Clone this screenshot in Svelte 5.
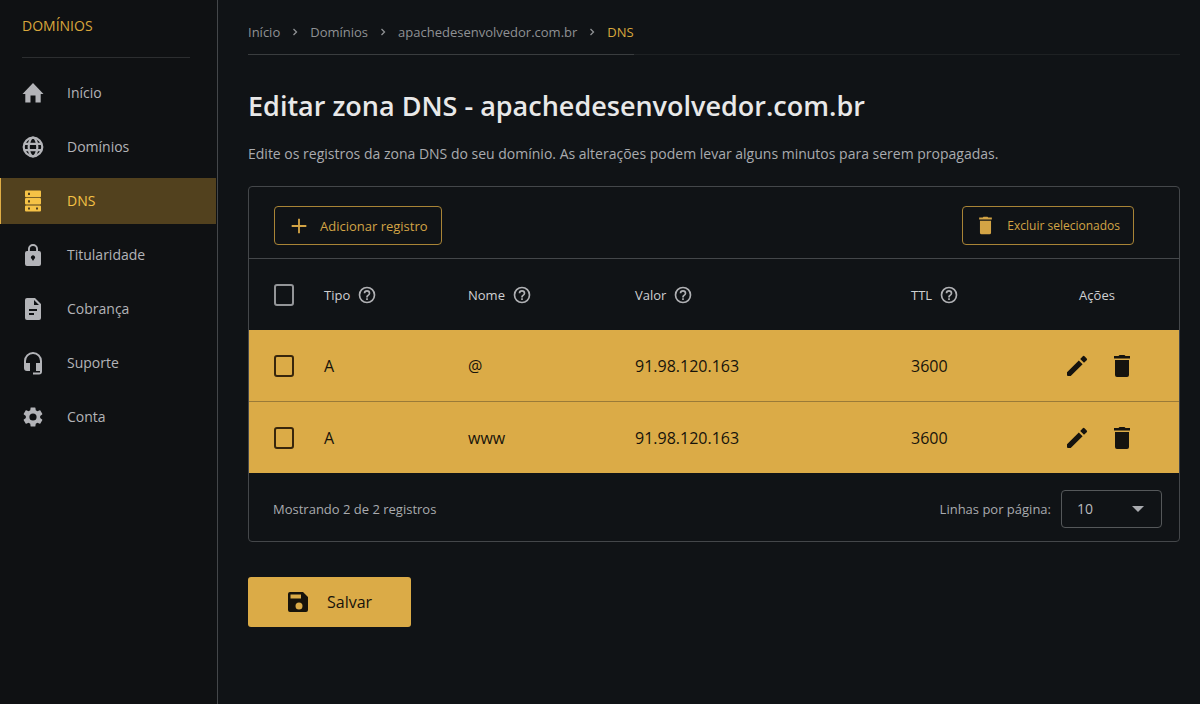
<script lang="ts">
  type IconName = keyof typeof icons;

  const icons = {
    home: 'M9.500 21.500v-7h5v7h5.200v-8.500h2.800L12 2 1.500 13h2.800v8.500z',
    dns: 'M5 1.500h14a1 1 0 0 1 1 1v4.700a1 1 0 0 1-1 1H5a1 1 0 0 1-1-1V2.500a1 1 0 0 1 1-1zm2 2.200v2.200h2V3.700zM5 9h14a1 1 0 0 1 1 1v4.500a1 1 0 0 1-1 1H5a1 1 0 0 1-1-1V10a1 1 0 0 1 1-1zm2 2.200v2.200h2v-2.200zM5 16.500h14a1 1 0 0 1 1 1v4a1 1 0 0 1-1 1H5a1 1 0 0 1-1-1v-4a1 1 0 0 1 1-1zm2 2v2h2v-2zm8 0v2h2v-2z',
    lock: 'M18 8h-1V6A5 5 0 0 0 7 6v2H6a2 2 0 0 0-2 2v11a2 2 0 0 0 2 2h12a2 2 0 0 0 2-2V10a2 2 0 0 0-2-2zM8.900 6a3.100 3.100 0 0 1 6.200 0v2H8.900zM12 18l-1.200-2a2 2 0 1 1 2.400 0z',
    file: 'M14 1H6a2 2 0 0 0-2 2v18a2 2 0 0 0 2 2h12a2 2 0 0 0 2-2V7zm-1 17H8v-2h5zm3-4H8v-2h8zm-3-6V3l5 5z',
    headset:
      'M12 1a9 9 0 0 0-9 9v7a3 3 0 0 0 3 3h3v-8H5v-2a7 7 0 0 1 14 0v2h-4v8h4v1.500h-7v2h6a3 3 0 0 0 3-3V10a9 9 0 0 0-9-9z',
    gear: 'M19.140 12.940c.040-.300.060-.610.060-.940 0-.320-.020-.640-.070-.940l2.030-1.580a.490.490 0 0 0 .120-.610l-1.920-3.320a.488.488 0 0 0-.590-.220l-2.390.960c-.500-.380-1.030-.700-1.620-.940l-.360-2.540a.484.484 0 0 0-.480-.410h-3.840c-.240 0-.430.170-.470.410l-.360 2.540c-.590.240-1.130.570-1.620.940l-2.390-.960c-.220-.080-.470 0-.590.220L2.740 8.870c-.120.210-.080.470.120.610l2.030 1.580c-.050.300-.090.630-.090.940s.020.640.070.940l-2.030 1.580a.490.490 0 0 0-.120.610l1.920 3.320c.120.220.370.290.590.220l2.390-.960c.500.380 1.030.700 1.620.940l.360 2.540c.050.240.240.410.480.410h3.840c.240 0 .440-.170.470-.410l.360-2.540c.590-.240 1.130-.560 1.620-.940l2.390.960c.220.080.470 0 .590-.220l1.920-3.320c.120-.220.070-.470-.120-.610zM12 15.600a3.600 3.600 0 1 1 0-7.200 3.600 3.600 0 0 1 0 7.200z',
    plus: 'M11 4h2v7h7v2h-7v7h-2v-7H4v-2h7z',
    trash: 'M5 6v15a2 2 0 0 0 2 2h10a2 2 0 0 0 2-2V6zM20 2h-4.500l-1-1h-5l-1 1H4v2.500h16z',
    pencil: 'M2 18.300V21a1 1 0 0 0 1 1h2.700L17.600 10.200l-3.800-3.800zM21.700 6.200a1.200 1.200 0 0 0 0-1.700l-2.200-2.200a1.200 1.200 0 0 0-1.700 0L15.200 4.900 19 8.800z',
    help: 'M11 18h2v-2h-2zm1-16a10 10 0 1 0 0 20 10 10 0 0 0 0-20zm0 18a8 8 0 1 1 0-16 8 8 0 0 1 0 16zm0-14a4 4 0 0 0-4 4h2a2 2 0 1 1 4 0c0 2-3 1.750-3 5h2c0-2.250 3-2.500 3-5a4 4 0 0 0-4-4z',
    save: 'M17 2H4a2 2 0 0 0-2 2v16a2 2 0 0 0 2 2h16a2 2 0 0 0 2-2V7zm-4 17.500a3.500 3.500 0 1 1 0-7 3.500 3.500 0 0 1 0 7zM15 8.500H4.500v-4H15z',
  };

  const menu: { label: string; icon: IconName | 'globe' }[] = [
    { label: 'Início', icon: 'home' },
    { label: 'Domínios', icon: 'globe' },
    { label: 'DNS', icon: 'dns' },
    { label: 'Titularidade', icon: 'lock' },
    { label: 'Cobrança', icon: 'file' },
    { label: 'Suporte', icon: 'headset' },
    { label: 'Conta', icon: 'gear' },
  ];

  const crumbs = ['Início', 'Domínios', 'apachedesenvolvedor.com.br'];
  const columns = ['Tipo', 'Nome', 'Valor', 'TTL'];

  let records = $state([
    { type: 'A', name: '@', value: '91.98.120.163', ttl: 3600, selected: false },
    { type: 'A', name: 'www', value: '91.98.120.163', ttl: 3600, selected: false },
  ]);
  let perPage = $state('10');
  let allSelected = $derived(records.length > 0 && records.every((r) => r.selected));

  function toggleAll() {
    const next = !allSelected;
    records.forEach((r) => (r.selected = next));
  }

  function addRecord() {
    records.push({ type: 'A', name: '@', value: '', ttl: 3600, selected: false });
  }
</script>

{#snippet icon(name: IconName | 'globe', size: number)}
  {#if name === 'globe'}
    <svg viewBox="0 0 24 24" width={size} height={size} aria-hidden="true">
      <g fill="none" stroke="currentColor" stroke-width="2.200">
        <circle cx="12" cy="12" r="9.300" />
        <ellipse cx="12" cy="12" rx="4.300" ry="9.300" />
        <path d="M3.500 8.800h17M3.500 15.200h17" />
      </g>
    </svg>
  {:else}
    <svg viewBox="0 0 24 24" width={size} height={size} fill="currentColor" fill-rule="evenodd" aria-hidden="true">
      <path d={icons[name]} />
    </svg>
  {/if}
{/snippet}

<div class="layout">
  <aside class="sidebar">
    <p class="brand">DOMÍNIOS</p>
    <nav class="menu" aria-label="Menu principal">
      {#each menu as item}
        <a href="#{item.icon}" class:active={item.label === 'DNS'}>
          {@render icon(item.icon, 24)}
          <span>{item.label}</span>
        </a>
      {/each}
    </nav>
  </aside>

  <main class="content">
    <nav class="crumbs" aria-label="Trilha">
      <ol>
        {#each crumbs as crumb}
          <li>
            <a href="#inicio">{crumb}</a>
            <svg viewBox="0 0 6 8" width="6" height="8" aria-hidden="true">
              <path d="M1.500 1l3 3-3 3" fill="none" stroke="currentColor" stroke-width="1.300" />
            </svg>
          </li>
        {/each}
        <li class="current" aria-current="page">DNS</li>
      </ol>
    </nav>

    <h1>Editar zona DNS - apachedesenvolvedor.com.br</h1>
    <p class="lead">
      Edite os registros da zona DNS do seu domínio. As alterações podem levar alguns minutos para serem propagadas.
    </p>

    <section class="card">
      <div class="toolbar">
        <button type="button" class="btn-outline" onclick={addRecord}>
          {@render icon('plus', 22)}
          Adicionar registro
        </button>
        <button
          type="button"
          class="btn-outline small"
          onclick={() => (records = records.filter((r) => !r.selected))}
        >
          {@render icon('trash', 19)}
          Excluir selecionados
        </button>
      </div>

      <table>
        <colgroup>
          <col class="col-check" />
          <col class="col-type" />
          <col class="col-name" />
          <col />
          <col class="col-ttl" />
          <col class="col-actions" />
        </colgroup>
        <thead>
          <tr>
            <th>
              <input type="checkbox" aria-label="Selecionar todos" checked={allSelected} onchange={toggleAll} />
            </th>
            {#each columns as column}
              <th scope="col">
                <span class="head">{column}{@render icon('help', 20)}</span>
              </th>
            {/each}
            <th scope="col" class="actions-head">Ações</th>
          </tr>
        </thead>
        <tbody>
          {#each records as record}
            <tr>
              <td>
                <input type="checkbox" aria-label="Selecionar {record.name}" bind:checked={record.selected} />
              </td>
              <td>{record.type}</td>
              <td>{record.name}</td>
              <td>{record.value}</td>
              <td>{record.ttl}</td>
              <td>
                <div class="actions">
                  <button type="button" aria-label="Editar {record.name}">{@render icon('pencil', 24)}</button>
                  <button
                    type="button"
                    aria-label="Excluir {record.name}"
                    onclick={() => (records = records.filter((r) => r !== record))}
                  >
                    {@render icon('trash', 24)}
                  </button>
                </div>
              </td>
            </tr>
          {/each}
        </tbody>
      </table>

      <div class="footer">
        <span>Mostrando {records.length} de {records.length} registros</span>
        <div class="per-page">
          <label for="per-page">Linhas por página:</label>
          <div class="select">
            <select id="per-page" bind:value={perPage}>
              <option>10</option>
              <option>25</option>
              <option>50</option>
            </select>
            <svg viewBox="0 0 12 6" width="12" height="6" aria-hidden="true">
              <path d="M0 0h12L6 6z" fill="currentColor" />
            </svg>
          </div>
        </div>
      </div>
    </section>

    <button type="button" class="btn-save">
      {@render icon('save', 24)}
      Salvar
    </button>
  </main>
</div>

<style>
  :global(body) {
    background: #101316;
  }

  .layout {
    --gold: #dbab47;
    --line: #44474a;
    --muted: #a9abaf;
    display: flex;
    min-height: 100vh;
    font-family: 'Open Sans', 'Noto Sans', sans-serif;
    font-size: 14px;
    line-height: 20px;
    color: var(--muted);
  }

  svg {
    display: block;
    flex: none;
  }

  a {
    color: inherit;
    text-decoration: none;
  }

  button,
  select {
    font: inherit;
    cursor: pointer;
  }

  .sidebar {
    box-sizing: border-box;
    flex: none;
    width: 218px;
    background: #0f1113;
    border-right: 1px solid #44474a;
  }

  .brand {
    margin: 0 27px 12px 22px;
    padding: 16px 0 21px;
    border-bottom: 1px solid #2c2e30;
    color: #d9a73c;
  }

  .menu {
    display: flex;
    flex-direction: column;
    gap: 8px;
    margin-right: 1px;
  }

  .menu a {
    display: flex;
    align-items: center;
    gap: 22px;
    height: 46px;
    padding-left: 20px;
    border-left: 1px solid transparent;
    color: #b3b4b8;
  }

  .menu a.active {
    background: #52411e;
    border-left-color: #e0ad45;
    color: #f5c246;
  }

  .content {
    flex: 1;
    min-width: 0;
    padding: 0 20px 40px 30px;
  }

  .crumbs {
    display: flex;
    border-bottom: 1px solid #1e2123;
    font-size: 13px;
    color: #8f9194;
  }

  .crumbs ol {
    display: flex;
    margin: 0 0 -1px;
    padding: 22px 0 12px;
    border-bottom: 1px solid #3a3d3f;
    list-style: none;
  }

  .crumbs li {
    display: flex;
    align-items: center;
  }

  .crumbs li svg {
    margin: 0 12px;
  }

  .crumbs .current {
    color: #d9a73c;
  }

  h1 {
    margin: 31px 0 0;
    font-size: 27px;
    font-weight: 600;
    line-height: 40px;
    color: #e8e8e8;
  }

  .lead {
    margin: 18px 0 22px;
  }

  .card {
    border: 1px solid var(--line);
    border-radius: 4px;
  }

  .toolbar {
    display: flex;
    justify-content: space-between;
    padding: 19px 45px 13px 25px;
    border-bottom: 1px solid var(--line);
  }

  .btn-outline {
    display: flex;
    align-items: center;
    gap: 10px;
    height: 39px;
    padding: 0 13px;
    border: 1px solid #a98436;
    border-radius: 4px;
    background: none;
    color: #d3a445;
    font-size: 13px;
  }

  .btn-outline.small {
    font-size: 12px;
    gap: 12px;
  }

  table {
    width: 100%;
    table-layout: fixed;
    border-collapse: collapse;
  }

  .col-check {
    width: 75px;
  }

  .col-type {
    width: 144px;
  }

  .col-name {
    width: 167px;
  }

  .col-ttl {
    width: 154px;
  }

  .col-actions {
    width: 114px;
  }

  th,
  td {
    padding: 0;
    text-align: left;
  }

  th {
    height: 71px;
    font-size: 13px;
    font-weight: 400;
    color: #cfd0d2;
  }

  td {
    height: 71px;
    font-size: 16px;
    color: #17130b;
  }

  th:first-child,
  td:first-child {
    padding-left: 25px;
  }

  tbody tr {
    background: var(--gold);
  }

  tbody tr + tr {
    border-top: 1px solid #9a7a38;
  }

  .head {
    display: flex;
    align-items: center;
    gap: 7px;
  }

  .head :global(svg) {
    color: #b0b1b4;
  }

  .actions-head {
    padding-right: 50px;
    text-align: center;
  }

  .actions {
    display: flex;
    gap: 21px;
  }

  .actions button {
    padding: 0;
    border: 0;
    background: none;
    color: #15130f;
  }

  input[type='checkbox'] {
    appearance: none;
    display: block;
    width: 20px;
    height: 22px;
    margin: 0;
    border: 2px solid #939598;
    border-radius: 3px;
  }

  td input[type='checkbox'] {
    border-color: #38260c;
  }

  input[type='checkbox']:checked {
    background: #38260c;
  }

  .footer {
    display: flex;
    align-items: center;
    justify-content: space-between;
    padding: 17px 17px 13px 24px;
    font-size: 13px;
  }

  .per-page {
    display: flex;
    align-items: center;
    gap: 10px;
  }

  .select {
    display: grid;
    align-items: center;
  }

  .select select,
  .select svg {
    grid-area: 1 / 1;
  }

  .select svg {
    justify-self: end;
    margin-right: 18px;
    pointer-events: none;
  }

  select {
    appearance: none;
    width: 101px;
    height: 38px;
    padding: 0 15px;
    border: 1px solid #55585a;
    border-radius: 4px;
    background: none;
    color: #b9bbbe;
    font-size: 14px;
  }

  .btn-save {
    display: flex;
    align-items: center;
    gap: 17px;
    height: 50px;
    margin-top: 35px;
    padding: 0 39px 0 38px;
    border: 0;
    border-radius: 3px;
    background: var(--gold);
    color: #17130b;
    font-size: 16px;
  }
</style>
